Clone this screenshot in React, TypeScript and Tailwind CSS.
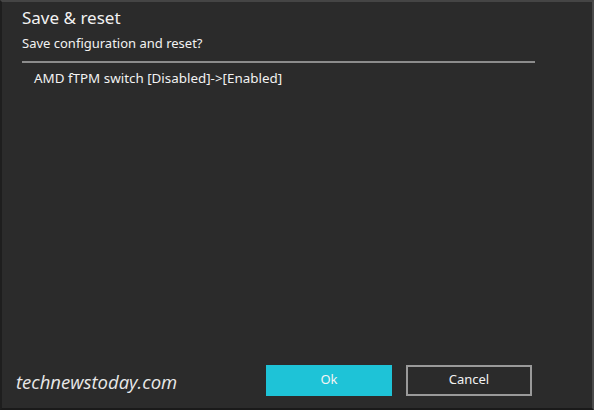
export default function App() {
  return (
    <div
      className="w-[594px] h-[410px] bg-[#2b2b2b] flex flex-col border-t-2 border-t-[#454545] border-l-2 border-l-[#1e1e1e] border-r-2 border-r-[#4a4a4a] border-b-2 border-b-[#1a1a1a] text-[#f2f2f2]"
      style={{ fontFamily: '"Noto Sans", "Open Sans", sans-serif' }}
    >
      <div className="pl-[20px] pr-[57px] pt-[4px]">
        <div className="text-[17px] leading-[24px]">Save &amp; reset</div>
        <div className="text-[13px] leading-[18px] mt-[4px]">Save configuration and reset?</div>
        <div className="h-[2px] bg-[#8c8c8c] mt-[9px]" />
        <div className="text-[13.4px] leading-[18px] mt-[6px] pl-[12px]">AMD fTPM switch [Disabled]-&gt;[Enabled]</div>
      </div>
      <div className="flex-1" />
      <div className="flex items-center pb-[12px]">
        <div
          className="w-[264px] pl-[14px] text-[18.5px] italic text-[#e8e8e8] mt-[4px]"
          style={{ fontFamily: '"Open Sans", "Noto Sans", sans-serif' }}
        >
          technewstoday.com
        </div>
        <button className="w-[126px] h-[31px] bg-[#1ec3d7] text-[13px] text-[#f4f4f4]">Ok</button>
        <button className="w-[126px] h-[31px] ml-[14px] border-2 border-[#9a9a9a] text-[13px] text-[#f2f2f2]">Cancel</button>
      </div>
    </div>
  );
}
